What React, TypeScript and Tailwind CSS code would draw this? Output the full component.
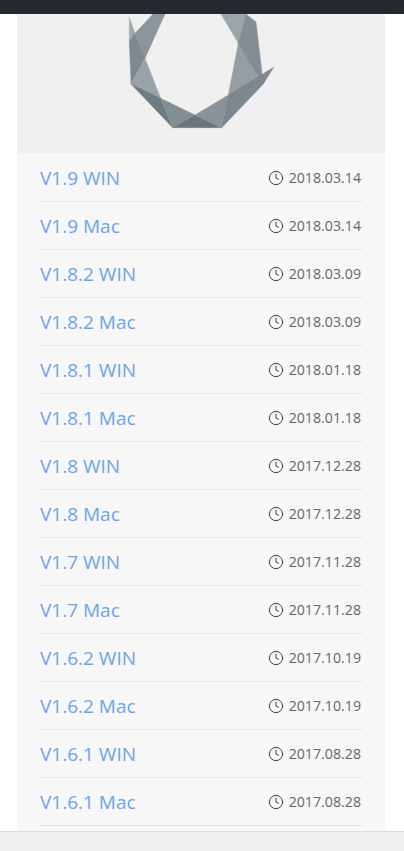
import { Clock } from "lucide-react";

const versions = [
  { name: "V1.9 WIN", date: "2018.03.14" },
  { name: "V1.9 Mac", date: "2018.03.14" },
  { name: "V1.8.2 WIN", date: "2018.03.09" },
  { name: "V1.8.2 Mac", date: "2018.03.09" },
  { name: "V1.8.1 WIN", date: "2018.01.18" },
  { name: "V1.8.1 Mac", date: "2018.01.18" },
  { name: "V1.8 WIN", date: "2017.12.28" },
  { name: "V1.8 Mac", date: "2017.12.28" },
  { name: "V1.7 WIN", date: "2017.11.28" },
  { name: "V1.7 Mac", date: "2017.11.28" },
  { name: "V1.6.2 WIN", date: "2017.10.19" },
  { name: "V1.6.2 Mac", date: "2017.10.19" },
  { name: "V1.6.1 WIN", date: "2017.08.28" },
  { name: "V1.6.1 Mac", date: "2017.08.28" },
];

const facets = [
  { points: "129.3,17.3 135,33.3 129.3,41.7", fill: "#a0a8ac" },
  { points: "135,33.3 153,14 165,14 145,58.3", fill: "#8b959b" },
  { points: "129.3,41.7 135,33.3 145,58.3 131,84", fill: "#7d888f" },
  { points: "131,84 145,58.3 160.7,98.3", fill: "#9aa3a7" },
  { points: "131,84 160.7,98.3 172.7,127.7", fill: "#6f7b82" },
  { points: "160.7,98.3 195,115 172.7,127.7", fill: "#848e95" },
  { points: "195,115 221.7,127.7 172.7,127.7", fill: "#6a767e" },
  { points: "195,115 228.3,95 221.7,127.7", fill: "#89939a" },
  { points: "228.3,95 238.3,43.3 263,79", fill: "#959fa3" },
  { points: "221,14 246,14 238.3,43.3", fill: "#9ca5a8" },
  { points: "246,14 256,22 263.3,84 238.3,43.3", fill: "#838d94" },
  { points: "228.3,95 273.7,67.3 263.3,84 221.7,127.7", fill: "#7c878e" },
];

function Logo() {
  return (
    <svg width="368" height="139" viewBox="17 14 368 139" className="block">
      {facets.map((f) => (
        <polygon key={f.points} points={f.points} fill={f.fill} stroke={f.fill} strokeWidth={0.4} />
      ))}
    </svg>
  );
}

export default function App() {
  return (
    <div className="flex h-[851px] flex-col overflow-hidden bg-white font-['Open_Sans',sans-serif]">
      <div className="h-[14px] shrink-0 bg-[#24292f]" />
      <div className="ml-[17px] w-[368px] min-h-0 flex-1 overflow-hidden bg-[#f7f7f7]">
        <div className="h-[139px] bg-[#f0f0f0]">
          <Logo />
        </div>
        <ul className="pl-[23px] pr-[24px] pt-px">
          {versions.map((v) => (
            <li
              key={v.name}
              className="flex h-[48px] items-center justify-between border-b border-dotted border-[#d4d4d4]"
            >
              <a className="pt-px text-[19px] text-[#6aa5ea]">{v.name}</a>
              <span className="flex h-[20px] items-center gap-[5px] text-[14.2px] leading-[20px] text-[#666]">
                <Clock size={16} strokeWidth={1.5} className="text-[#444]" />
                {v.date}
              </span>
            </li>
          ))}
        </ul>
      </div>
      <div className="h-[20px] shrink-0 border-t border-[#dcdcdc] bg-[#f0f0f0]" />
    </div>
  );
}
